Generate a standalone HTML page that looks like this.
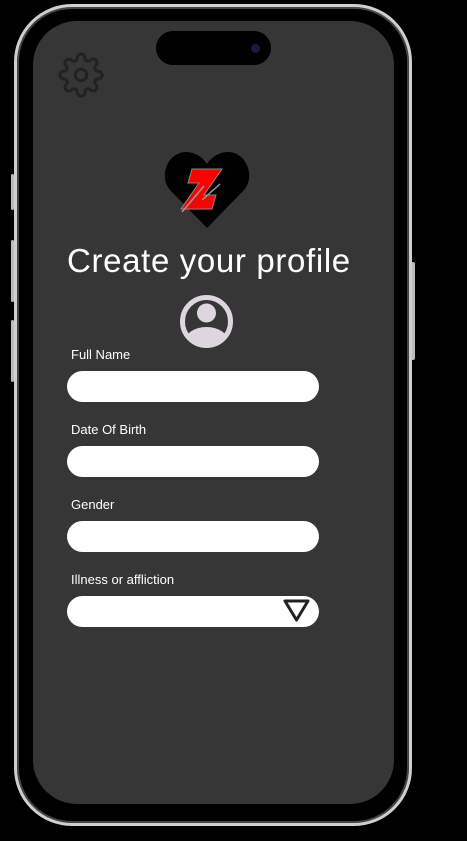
<!DOCTYPE html>
<html><head><meta charset="utf-8"><style>
html,body{margin:0;padding:0;background:#000;width:467px;height:841px;overflow:hidden;position:relative;font-family:"Liberation Sans",sans-serif}
.frame{position:absolute;left:14px;top:4px;width:398px;height:822px;border-radius:58px;border:3px solid #cfcfcf;box-sizing:border-box;background:#000;box-shadow:inset 0 0 0 2px #444}
.screen{position:absolute;left:33px;top:21px;width:361px;height:783px;border-radius:44px;background:#363636}
.island{position:absolute;left:156px;top:31px;width:115px;height:34px;border-radius:17px;background:#000}
.btn{position:absolute;background:#bbb;border-radius:2px}
.label{position:absolute;left:71px;color:#fff;font-size:13px}
.input{position:absolute;left:67px;width:252px;height:31px;border-radius:16px;background:#fff}
.title{position:absolute;left:67px;top:242px;color:#fff;font-size:33px;font-weight:300;letter-spacing:0.65px;white-space:nowrap}
</style></head><body>
<div class="btn" style="left:11px;top:174px;width:3px;height:36px"></div>
<div class="btn" style="left:11px;top:240px;width:3px;height:62px"></div>
<div class="btn" style="left:11px;top:320px;width:3px;height:62px"></div>
<div class="btn" style="left:411px;top:262px;width:4px;height:98px"></div>
<div class="frame"></div>
<div class="screen"></div>
<div class="island"></div>
<div style="position:absolute;left:251px;top:44px;width:9px;height:9px;border-radius:50%;background:#1a1a40"></div>
<svg style="position:absolute;left:58px;top:52px" width="46" height="46" viewBox="0 0 24 24" fill="none" stroke="#222" stroke-width="1.6" stroke-linejoin="round">
<circle cx="12" cy="12" r="3"/>
<path d="M19.4 15a1.65 1.65 0 0 0 .33 1.820l.06.06a2 2 0 1 1-2.830 2.830l-.06-.06a1.65 1.65 0 0 0-1.820-.33 1.65 1.65 0 0 0-1 1.510V21a2 2 0 1 1-4 0v-.09A1.65 1.65 0 0 0 9 19.4a1.65 1.65 0 0 0-1.820.33l-.06.06a2 2 0 1 1-2.830-2.830l.06-.06A1.65 1.65 0 0 0 4.680 15a1.65 1.65 0 0 0-1.510-1H3a2 2 0 1 1 0-4h.09A1.65 1.65 0 0 0 4.6 9a1.65 1.65 0 0 0-.33-1.820l-.06-.06a2 2 0 1 1 2.830-2.830l.06.06A1.65 1.65 0 0 0 9 4.680a1.65 1.65 0 0 0 1-1.510V3a2 2 0 1 1 4 0v.09a1.65 1.65 0 0 0 1 1.510 1.65 1.65 0 0 0 1.820-.33l.06-.06a2 2 0 1 1 2.830 2.830l-.06.06A1.65 1.65 0 0 0 19.4 9a1.65 1.65 0 0 0 1.510 1H21a2 2 0 1 1 0 4h-.09a1.65 1.65 0 0 0-1.510 1z"/>
</svg>
<svg style="position:absolute;left:164px;top:150px" width="86" height="80" viewBox="0 0 86 80">
<path d="M43 78 L6 40 C-6 26 4 2 22 2 C32 2 39 8 43 14 C47 8 54 2 64 2 C82 2 92 26 80 40 Z" fill="#000"/>
<path d="M28 19 L58 19 L40 45 L52 45 L48 59 L17 59 L35 33 L24 33 Z" fill="#f00" stroke="#888" stroke-width="1"/>
<path d="M18 62 L40 36 M38 50 L56 34" stroke="#999" stroke-width="1.5"/>
</svg>
<div class="title">Create your profile</div>
<svg style="position:absolute;left:179px;top:294px" width="55" height="55" viewBox="0 0 55 55">
<defs><clipPath id="c"><circle cx="27.5" cy="27.5" r="22"/></clipPath></defs>
<circle cx="27.5" cy="27.5" r="24" fill="none" stroke="#ddd6de" stroke-width="5"/>
<circle cx="27.5" cy="19" r="9.5" fill="#ddd6de"/>
<ellipse cx="27.5" cy="48" rx="22" ry="15" fill="#ddd6de" clip-path="url(#c)"/>
</svg>
<div class="label" style="top:347px">Full Name</div>
<div class="input" style="top:371px"></div>
<div class="label" style="top:422px">Date Of Birth</div>
<div class="input" style="top:446px"></div>
<div class="label" style="top:497px">Gender</div>
<div class="input" style="top:521px"></div>
<div class="label" style="top:572px">Illness or affliction</div>
<div class="input" style="top:596px"></div>
<svg style="position:absolute;left:282px;top:598px" width="29" height="26" viewBox="0 0 29 26">
<path d="M3 3 L26 3 L14.5 22 Z" fill="none" stroke="#222" stroke-width="3" stroke-linejoin="round"/>
</svg>
</body></html>
